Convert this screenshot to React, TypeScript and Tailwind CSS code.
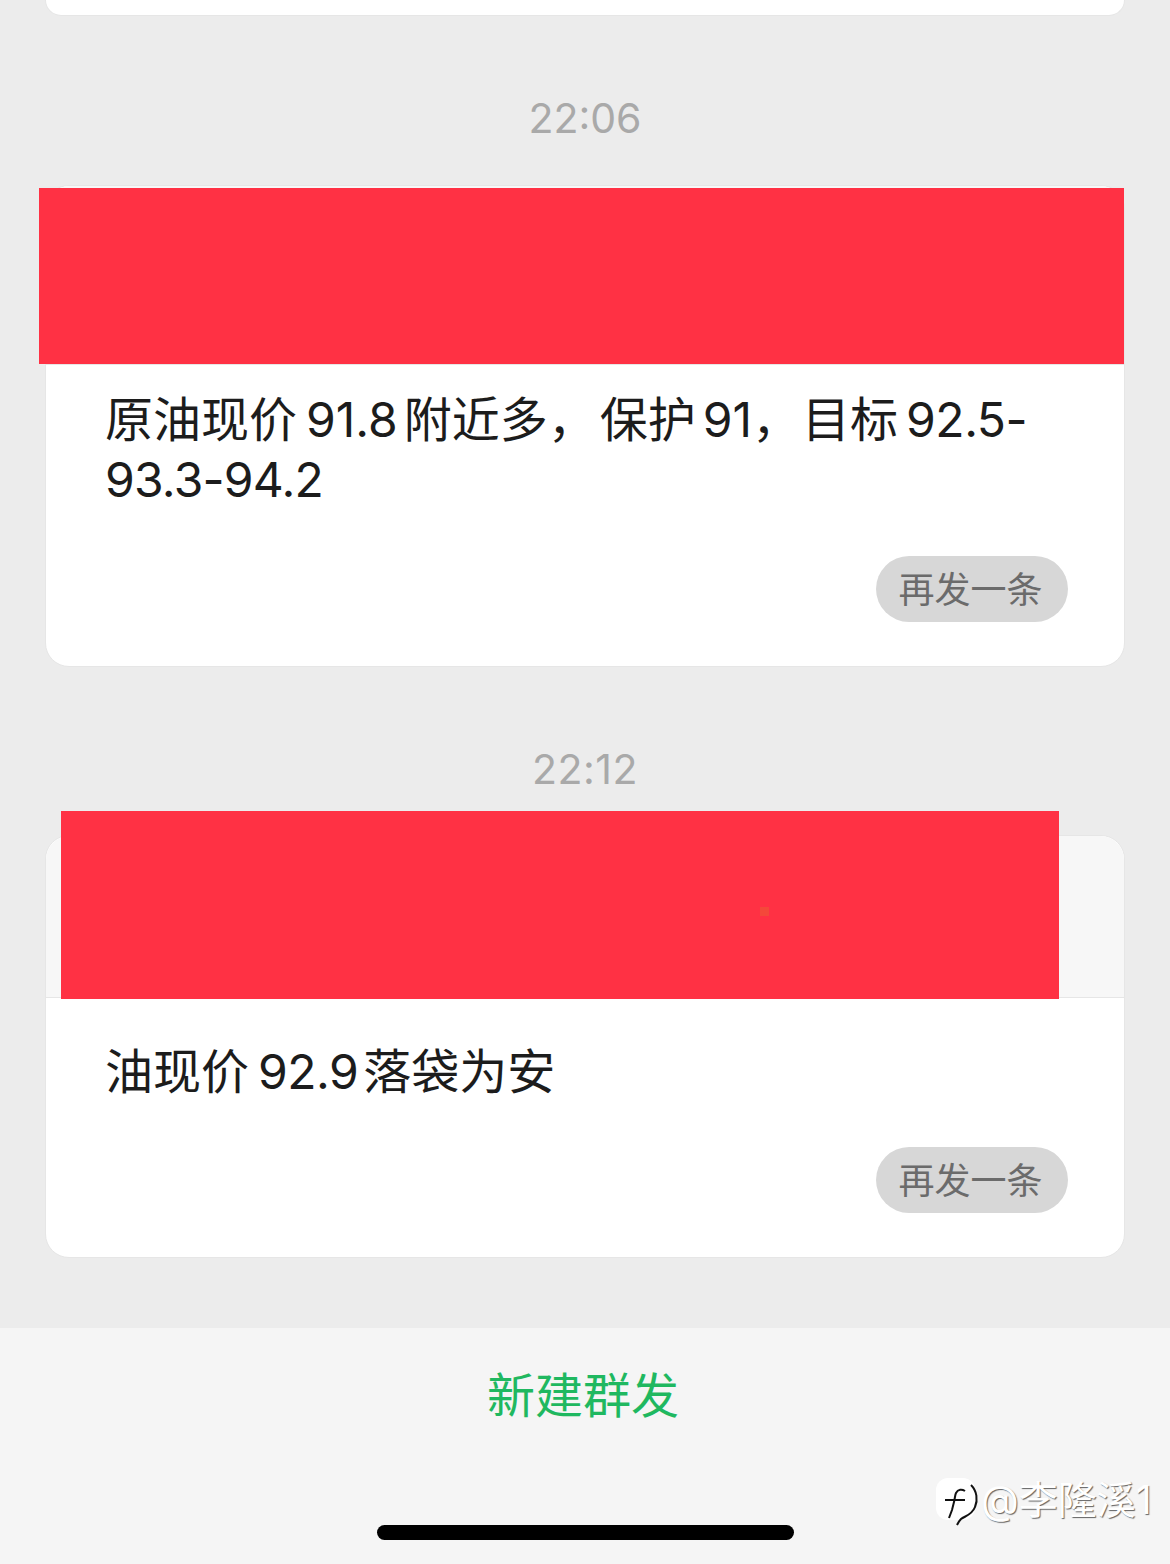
const font = "[font-family:'Inter','Noto_Sans_CJK_SC',sans-serif]";

function Card({ children, redClass, headerH, dot }: { children: React.ReactNode; redClass: string; headerH: string; dot?: boolean }) {
  return (
    <div className="relative mx-[45px] rounded-[24px] border border-[#e6e6e6] bg-white">
      <div className={`${headerH} rounded-t-[24px] border-b border-[#e6e6e6] bg-[#f7f7f7]`} />
      <div className={`absolute bg-[#ff3144] ${redClass}`}>
        {dot && <div className="absolute left-[699px] top-[96px] h-[9px] w-[9px] bg-[#f4483a]" />}
      </div>
      {children}
    </div>
  );
}

function Resend({ top }: { top: string }) {
  return (
    <div className={`flex justify-end pr-[56px] ${top} pb-[44px]`}>
      <button className="flex h-[66px] w-[192px] items-center justify-center rounded-full bg-[#d7d7d7] pt-[1px] pr-[3px] text-[36px] leading-none text-[#6b6b6b]">
        再发一条
      </button>
    </div>
  );
}

function Gap({ w }: { w: string }) {
  return <span className={`inline-block ${w}`} />;
}

export default function App() {
  return (
    <div className={`flex h-[1564px] w-[1170px] flex-col bg-[#ececec] ${font}`}>
      <div className="mx-[45px] h-[16px] rounded-b-[24px] border border-t-0 border-[#e6e6e6] bg-white" />

      <div className="flex h-[169px] items-center justify-center pt-[36px] text-[41px] leading-none text-[#a9a9a9]">22:06</div>

      <Card headerH="h-[179px]" redClass="left-[-7px] right-0 top-[2px] h-[176px]">
        <p className="pl-[59px] pr-[80px] pt-[25px] text-[48px] leading-[60px] text-[#1c1c1c]">
          原油现价<Gap w="w-[9px]" />91.8<Gap w="w-[6px]" />附近多，<Gap w="w-[4px]" />保护<Gap w="w-[7px]" />91，<Gap w="w-[2px]" />目标<Gap w="w-[8px]" /><span className="tracking-[-0.5px]">92.5-</span><span className="tracking-[-0.75px]">93.3-94.2</span>
        </p>
        <Resend top="pt-[46px]" />
      </Card>

      <div className="flex h-[168px] items-center justify-center pt-[37px] text-[41px] leading-none tracking-[0.5px] text-[#a9a9a9]">22:12</div>

      <Card headerH="h-[162px]" redClass="left-[15px] right-[65px] top-[-25px] h-[188px]" dot>
        <p className="pl-[59px] pr-[80px] pt-[44px] text-[48px] leading-[60px] text-[#1c1c1c]">
          油现价<Gap w="w-[9px]" /><span className="tracking-[-0.5px]">92.9</span><Gap w="w-[5px]" />落袋为安
        </p>
        <Resend top="pt-[45px]" />
      </Card>

      <div className="mt-[70px] flex min-h-0 flex-1 flex-col items-center bg-[#f5f5f5]">
        <div className="pt-[44px] pr-[4px] text-[48px] font-normal leading-[48px] text-[#1fb860]">新建群发</div>
      </div>

      <div className="absolute left-[936px] top-[1478px] flex h-[48px] w-[234px] items-start">
        <svg width="44" height="48" viewBox="0 0 44 48" className="shrink-0">
          <rect x="0" y="0" width="39" height="42" rx="12" fill="#ffffff" />
          <path d="M35 7c6 6 7 15 4 22-3 8-10 9-14 12-2 2-3 4-4 6" fill="none" stroke="#111" strokeWidth="2" />
          <path d="M29 13c-3-2-7-2-9 2-1 2-1 5-2 9l-2 8-3 8M9 22h20" fill="none" stroke="#111" strokeWidth="2" />
        </svg>
        <span className="mt-[2px] ml-[1px] whitespace-nowrap text-[39px] leading-[40px] text-white [text-shadow:1px_1px_1px_rgba(0,0,0,0.6)]">@李隆溪1</span>
      </div>

      <div className="absolute left-[377px] top-[1525px] h-[15px] w-[417px] rounded-full bg-black" />
    </div>
  );
}
